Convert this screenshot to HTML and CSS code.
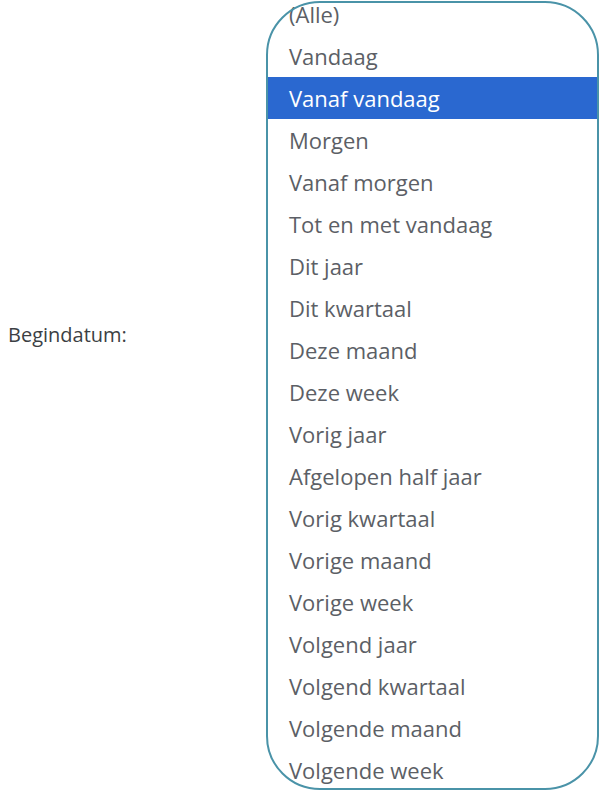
FILE: index.html
```html
<!DOCTYPE html>
<html lang="nl">
<head>
    <meta charset="UTF-8">
    <title>Begindatum</title>
    <link rel="stylesheet" href="styles.css">
</head>
<body>
    <div class="field">
        <label class="field-label" for="startdate">Begindatum:</label>

        <!-- Opened date filter dropdown -->
        <div class="picker" id="startdate">
            <ul class="options">
                <li>(Alle)</li>
                <li>Vandaag</li>
                <li class="selected">Vanaf vandaag</li>
                <li>Morgen</li>
                <li>Vanaf morgen</li>
                <li>Tot en met vandaag</li>
                <li>Dit jaar</li>
                <li>Dit kwartaal</li>
                <li>Deze maand</li>
                <li>Deze week</li>
                <li>Vorig jaar</li>
                <li>Afgelopen half jaar</li>
                <li>Vorig kwartaal</li>
                <li>Vorige maand</li>
                <li>Vorige week</li>
                <li>Volgend jaar</li>
                <li>Volgend kwartaal</li>
                <li>Volgende maand</li>
                <li>Volgende week</li>
            </ul>
        </div>
    </div>
</body>
</html>
```

FILE: styles.css
```css
* {
    box-sizing: border-box;
    margin: 0;
    padding: 0;
    font-family: 'Open Sans', sans-serif;
}

body {
    background-color: #ffffff;
    color: #5c5f66;
    height: 791px;
    overflow: hidden;
}

.field {
    display: flex;
    align-items: flex-start;
    height: 791px;
}

.field-label {
    width: 266px;
    margin-top: 321px;
    padding-left: 8px;
    font-size: 20px;
    line-height: 28px;
    color: #3c3f44;
}

.picker {
    position: relative;
    width: 333px;
    height: 791px;
    overflow: hidden;
}

/* rounded frame drawn on top of the list */
.picker::after {
    content: "";
    position: absolute;
    top: 1px;
    left: 0;
    right: 0;
    bottom: 1px;
    border: 2px solid #4a93a8;
    border-radius: 54px;
    pointer-events: none;
}

.options {
    list-style: none;
    margin-top: -7px;
}

.options li {
    height: 42px;
    line-height: 42px;
    padding-left: 23px;
    font-size: 22px;
    white-space: nowrap;
}

.options li.selected {
    background-color: #2a68d0;
    color: #ffffff;
    margin-left: 2px;
    padding-left: 21px;
}
```
